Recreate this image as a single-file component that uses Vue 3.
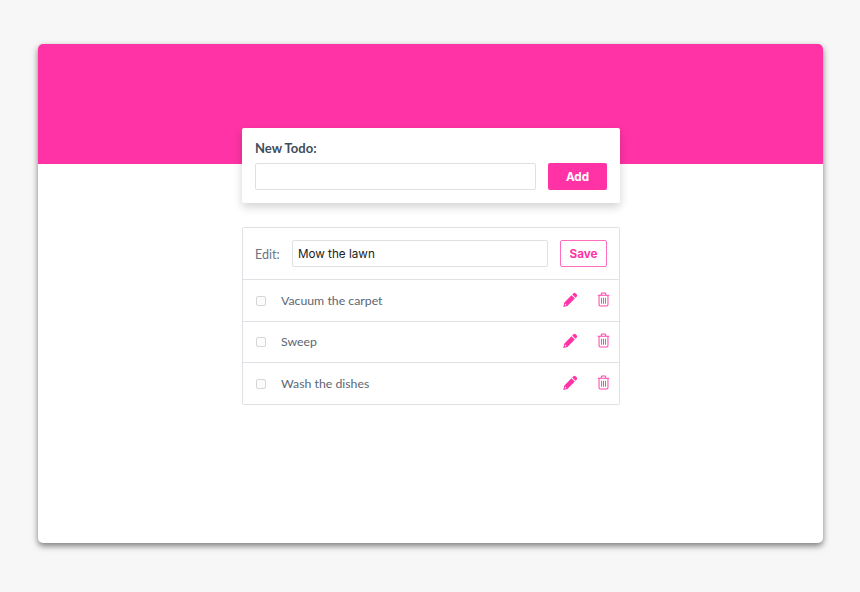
<template>
  <div class="page">
    <div class="window">
      <div class="banner"></div>
      <div class="content">
        <form class="new-todo" @submit.prevent>
          <label class="new-label">New Todo:</label>
          <div class="new-row">
            <input class="text-input new-input" type="text" />
            <button class="add-btn">Add</button>
          </div>
        </form>

        <div class="todo-list">
          <div class="edit-row">
            <span class="edit-label">Edit:</span>
            <input class="text-input edit-input" type="text" value="Mow the lawn" />
            <button class="save-btn">Save</button>
          </div>
          <div class="todo-row" v-for="todo in todos" :key="todo">
            <span class="check"></span>
            <span class="todo-text">{{ todo }}</span>
            <svg class="pencil" viewBox="0 0 16 16">
              <path d="M11.2 1.3a1.6 1.6 0 0 1 2.2 0l1.3 1.3a1.6 1.6 0 0 1 0 2.2l-1.3 1.4-3.6-3.6z" />
              <path fill-rule="evenodd" d="M9 3.4l3.6 3.6-7.9 7.9-4.4 1 1-4.5zM2.3 12.3l-.5 2 2-.5z" />
            </svg>
            <svg class="trash" viewBox="0 0 14 16">
              <path d="M.8 3.4h12.4M4.6 3.2V2.1c0-.6.4-1 1-1h2.8c.6 0 1 .4 1 1v1.1" />
              <path d="M2.2 3.4v10.3c0 .8.6 1.4 1.4 1.4h6.8c.8 0 1.4-.6 1.4-1.4V3.4" />
              <path d="M4.9 6v6.6M7 6v6.6M9.1 6v6.6" />
            </svg>
          </div>
        </div>
      </div>
    </div>
  </div>
</template>

<script setup>
const todos = ['Vacuum the carpet', 'Sweep', 'Wash the dishes']
</script>

<style>
html,
body {
  background: #f7f7f7;
}
</style>

<style scoped>
.page {
  box-sizing: border-box;
  width: 860px;
  height: 592px;
  padding: 44px 37px 0 38px;
  background: #f7f7f7;
  overflow: hidden;
}

.window {
  height: 499px;
  background: #fff;
  border-radius: 5px;
  overflow: hidden;
  box-shadow: 0 3px 6px rgba(0, 0, 0, 0.5);
}

.banner {
  height: 120px;
  background: #ff33a5;
}

.content {
  display: flex;
  flex-direction: column;
  width: 378px;
  margin: -36px 0 0 204px;
  position: relative;
}

.new-todo {
  box-sizing: border-box;
  height: 75px;
  padding: 12px 13px 0 13px;
  background: #fff;
  border-radius: 2px;
  box-shadow: 0 4px 10px rgba(0, 0, 0, 0.18);
}

.new-label {
  display: block;
  font-family: Lato, sans-serif;
  font-size: 13px;
  font-weight: 700;
  line-height: 16px;
  color: #414d5c;
}

.new-row {
  display: flex;
  justify-content: space-between;
  margin-top: 7px;
}

.text-input {
  box-sizing: border-box;
  height: 27px;
  padding: 1px 5px 0;
  border: 1px solid #dfe0e3;
  border-radius: 2px;
  background: #fff;
  font-family: Inter, sans-serif;
  font-size: 11.7px;
  color: #222;
  outline: none;
}

.new-input {
  width: 281px;
}

.add-btn {
  width: 59px;
  height: 27px;
  padding: 1px 0 0;
  border: none;
  border-radius: 2px;
  background: #ff33a5;
  color: #fff;
  font-family: Inter, sans-serif;
  font-size: 11.7px;
  font-weight: 700;
}

.todo-list {
  margin-top: 24px;
  border: 1px solid #e0e1e4;
  border-radius: 2px;
}

.edit-row {
  display: flex;
  align-items: center;
  height: 51px;
  padding: 0 12px;
  border-bottom: 1px solid #e0e1e4;
}

.edit-label {
  width: 37px;
  padding-top: 1px;
  font-family: Lato, sans-serif;
  font-size: 12.5px;
  color: #6b7480;
}

.edit-input {
  width: 257px;
}

.save-btn {
  box-sizing: border-box;
  width: 47px;
  height: 27px;
  margin-left: 12px;
  padding: 1px 0 0;
  border: 1px solid #ff6dbe;
  border-radius: 2px;
  background: #fff;
  color: #ff33a5;
  font-family: Inter, sans-serif;
  font-size: 11.7px;
  font-weight: 700;
}

.todo-row {
  display: flex;
  align-items: center;
  height: 40.5px;
  padding: 0 9px 0 13px;
  border-bottom: 1px solid #e0e1e4;
}

.todo-row:last-child {
  border-bottom: none;
}

.check {
  box-sizing: border-box;
  width: 10px;
  height: 10px;
  margin-top: 1px;
  border: 1px solid #d4d6d9;
  border-radius: 2px;
  background: #fcfcfc;
}

.todo-text {
  flex: 1;
  margin-left: 15px;
  font-family: Lato, sans-serif;
  font-size: 12.3px;
  color: #5c6673;
}

.pencil {
  fill: #ff33a5;
  margin: -2px 0 0 0;
  width: 15px;
  height: 15px;
}

.trash {
  fill: none;
  stroke: #ff45ad;
  stroke-width: 1.1;
  margin: -2px 0 0 19px;
  width: 13px;
  height: 15px;
}
</style>
